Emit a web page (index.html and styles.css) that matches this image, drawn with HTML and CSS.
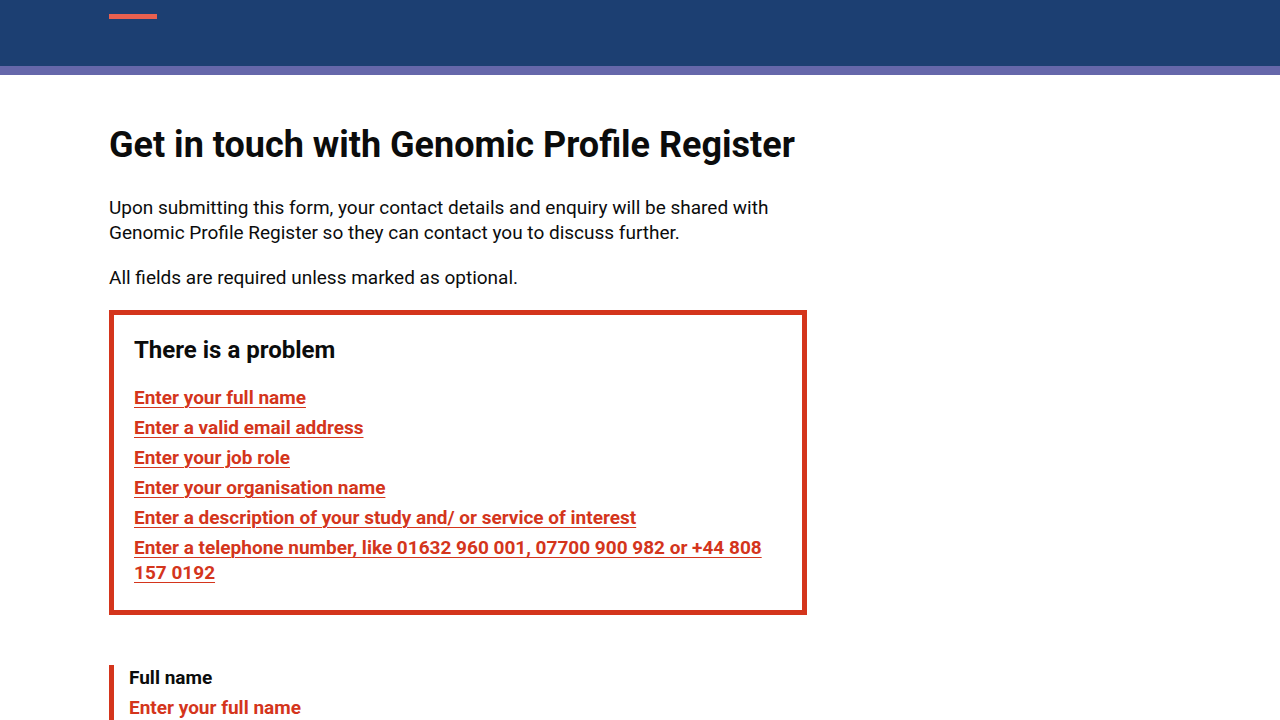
FILE: index.html
```html
<!DOCTYPE html>
<html lang="en">
<head>
<meta charset="utf-8">
<title>Get in touch with Genomic Profile Register</title>
<link rel="stylesheet" href="styles.css">
</head>
<body>
<header class="site-header">
  <div class="container">
    <div class="accent"></div>
  </div>
</header>
<main class="container">
  <div class="column">
    <h1 class="heading-l">Get in touch with Genomic Profile Register</h1>
    <p class="body">Upon submitting this form, your contact details and enquiry will be shared with Genomic Profile Register so they can contact you to discuss further.</p>
    <p class="body">All fields are required unless marked as optional.</p>
    <div class="error-summary">
      <h2 class="error-summary-title">There is a problem</h2>
      <ul class="error-list">
        <li><a href="#full-name">Enter your full name</a></li>
        <li><a href="#email">Enter a valid email address</a></li>
        <li><a href="#job-role">Enter your job role</a></li>
        <li><a href="#organisation">Enter your organisation name</a></li>
        <li><a href="#description">Enter a description of your study and/ or service of interest</a></li>
        <li><a href="#telephone">Enter a telephone number, like 01632 960 001, 07700 900 982 or +44 808 157 0192</a></li>
      </ul>
    </div>
    <div class="form-group form-group-error">
      <label class="label" for="full-name">Full name</label>
      <p class="error-message">Enter your full name</p>
      <input class="input" id="full-name" type="text">
    </div>
  </div>
</main>
</body>
</html>
```
FILE: styles.css
```css
html, body {
  margin: 0;
  padding: 0;
}
body {
  font-family: Roboto, "Liberation Sans", Arial, sans-serif;
  color: #0b0c0c;
  background: #ffffff;
}
.container {
  max-width: 1062px;
  margin: 0 auto;
}
.site-header {
  background: #1c3f72;
  height: 66px;
  border-bottom: 9px solid #6567aa;
  padding-top: 14px;
  box-sizing: content-box;
  height: 52px;
}
.accent {
  width: 48px;
  height: 5px;
  background: #e8604f;
}
main.container {
  padding-top: 50px;
}
.column {
  width: 698px;
}
.heading-l {
  font-size: 36px;
  line-height: 40px;
  font-weight: 700;
  margin: 0 0 30px;
}
.body {
  font-size: 19px;
  line-height: 25px;
  margin: 0 0 20px;
}
.error-summary {
  border: 5px solid #d4351c;
  padding: 20px;
  margin-bottom: 50px;
}
.error-summary-title {
  font-size: 24px;
  line-height: 30px;
  font-weight: 700;
  margin: 0 0 20px;
}
.error-list {
  list-style: none;
  margin: 0;
  padding: 0;
}
.error-list li {
  font-size: 19px;
  line-height: 25px;
  font-weight: 700;
  margin-bottom: 5px;
}
.error-list a {
  color: #d4351c;
  text-decoration: underline;
  text-decoration-thickness: 1px;
  text-underline-offset: 3px;
}
.form-group-error {
  border-left: 5px solid #d4351c;
  padding-left: 15px;
}
.label {
  display: block;
  font-size: 19px;
  line-height: 25px;
  font-weight: 700;
  margin-bottom: 5px;
}
.error-message {
  font-size: 19px;
  line-height: 25px;
  font-weight: 700;
  color: #d4351c;
  margin: 0 0 15px;
}
.input {
  box-sizing: border-box;
  width: 100%;
  height: 40px;
  border: 2px solid #d4351c;
  font: inherit;
}
```
